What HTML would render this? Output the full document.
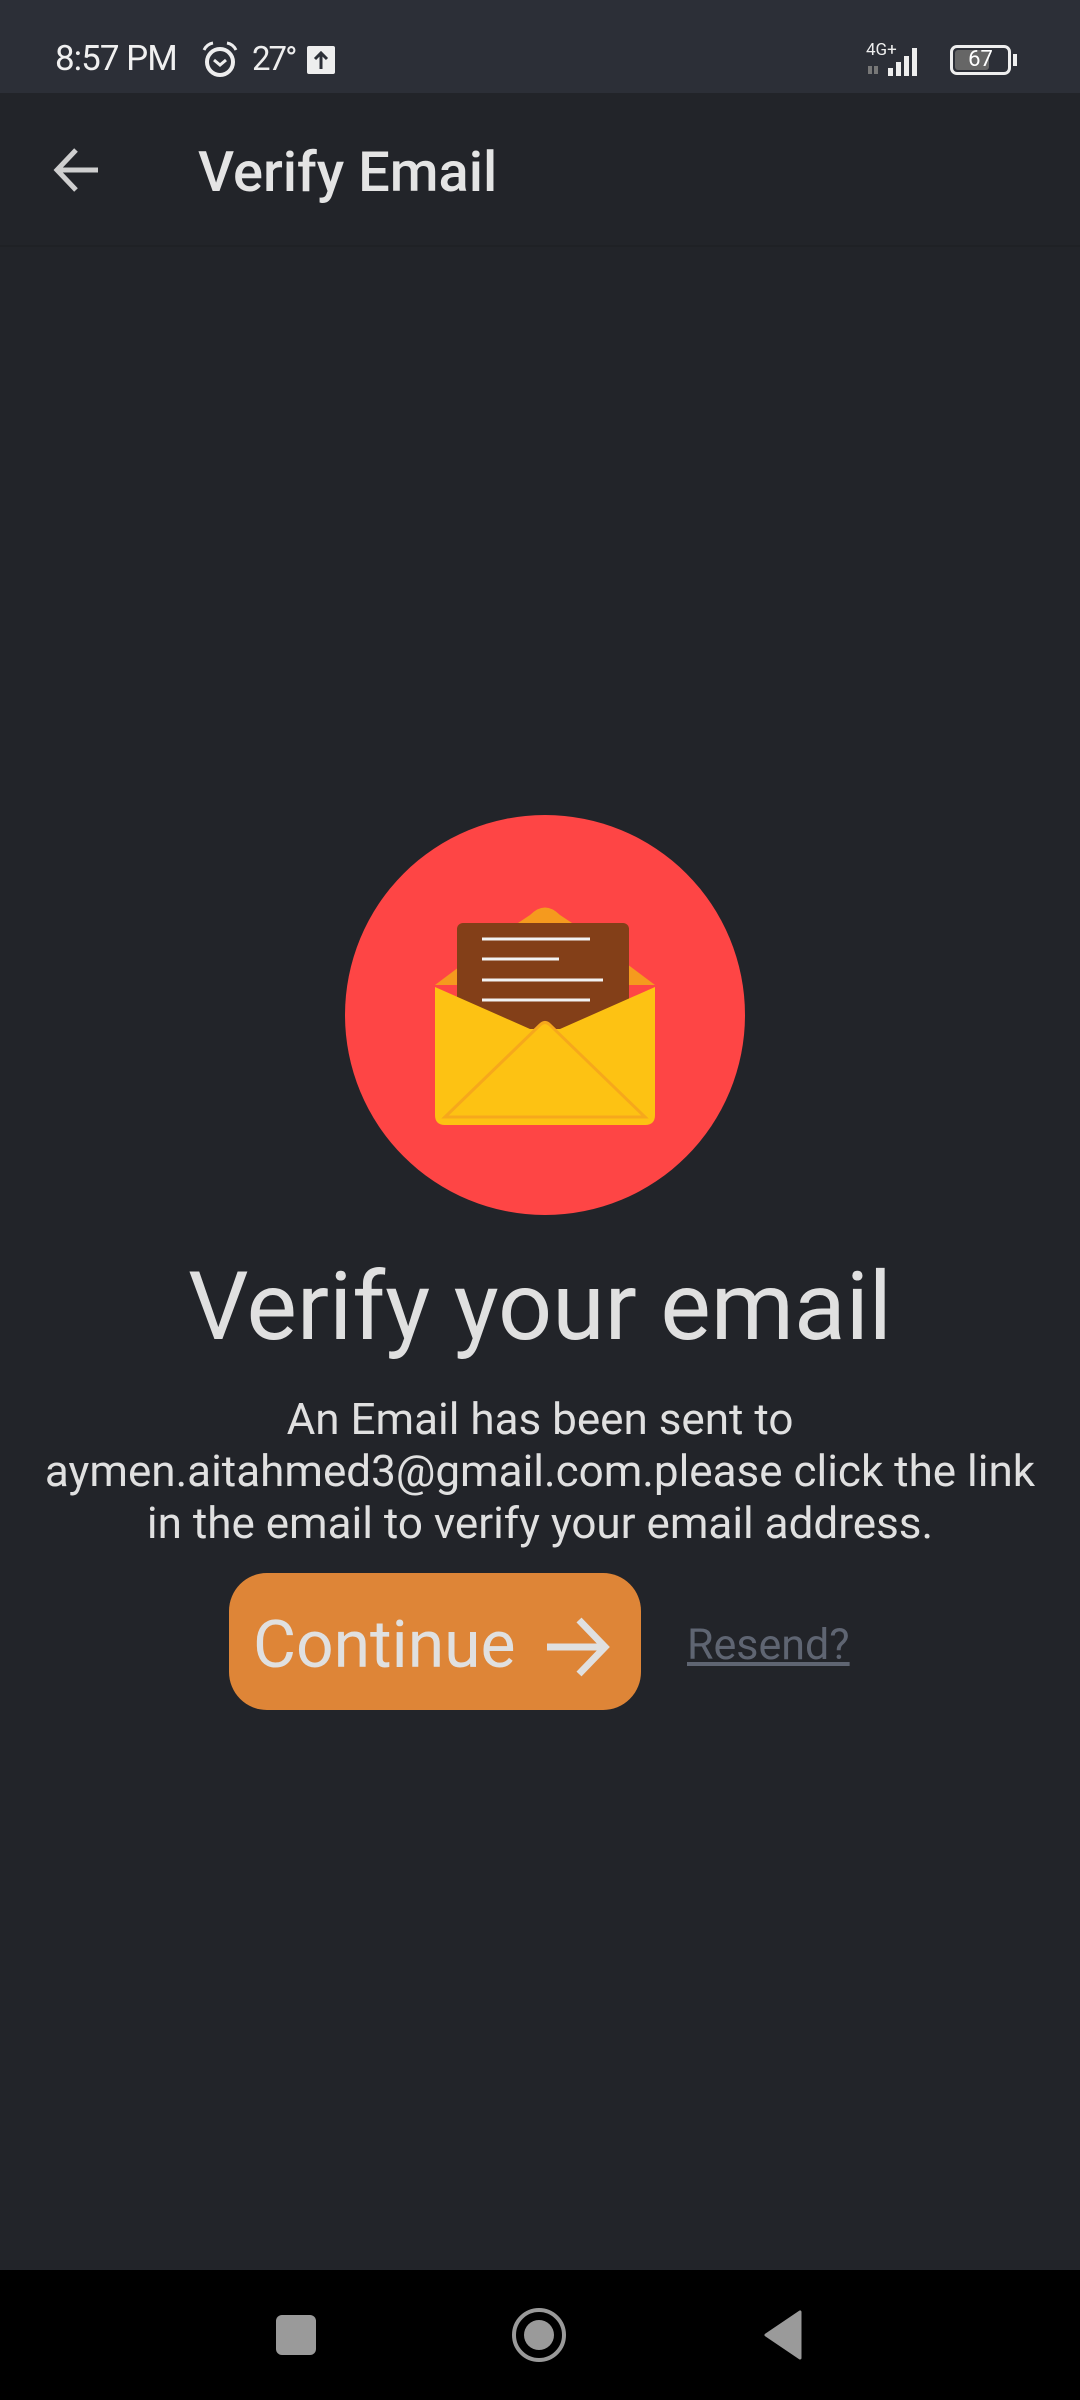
<!DOCTYPE html>
<html><head><meta charset="utf-8"><style>
*{margin:0;padding:0;box-sizing:border-box}
body{width:1080px;height:2400px;background:#222429;font-family:"Roboto","Liberation Sans",sans-serif;color:#e2e2e2;position:relative;overflow:hidden}
.abs{position:absolute}
</style></head><body>
<div class="abs" style="left:0;top:0;width:1080px;height:93px;background:#2c2f37"></div>
<div class="abs" style="left:55px;top:38px;font-size:35px;color:#f0f0f0;letter-spacing:-1px">8:57 PM</div>
<svg class="abs" style="left:200px;top:40px" width="40" height="40" viewBox="0 0 40 40"><circle cx="20" cy="22" r="13" fill="none" stroke="#eee" stroke-width="4"/><path d="M14 20l6 5 6-5" fill="none" stroke="#eee" stroke-width="3"/><path d="M4 10q3-6 9-7M36 10q-3-6-9-7" fill="none" stroke="#eee" stroke-width="3"/></svg>
<div class="abs" style="left:252px;top:40px;font-size:33px;color:#eee;letter-spacing:-2px">27°</div>
<div class="abs" style="left:307px;top:46px;width:28px;height:28px;background:#eee;border-radius:2px"></div>
<svg class="abs" style="left:307px;top:46px" width="28" height="28"><path d="M14 23V7M8 13l6-6 6 6" fill="none" stroke="#2c2f37" stroke-width="3"/></svg>
<div class="abs" style="left:866px;top:40px;font-size:17px;color:#eee">4G+</div>
<svg class="abs" style="left:866px;top:44px" width="70" height="32"><rect x="22" y="24" width="5" height="8" fill="#eee"/><rect x="30" y="18" width="5" height="14" fill="#eee"/><rect x="38" y="12" width="5" height="20" fill="#eee"/><rect x="46" y="4" width="5" height="28" fill="#eee"/><rect x="2" y="22" width="4" height="8" fill="#777"/><rect x="8" y="22" width="4" height="8" fill="#777"/></svg>
<div class="abs" style="left:950px;top:45px;width:61px;height:30px;border:3px solid #eee;border-radius:7px"></div>
<div class="abs" style="left:955px;top:50px;width:34px;height:20px;background:#666;border-radius:3px"></div>
<div class="abs" style="left:1013px;top:54px;width:4px;height:12px;background:#eee"></div>
<div class="abs" style="left:955px;top:45px;width:51px;text-align:center;font-size:22px;line-height:30px;color:#fff">67</div>

<div class="abs" style="left:0;top:93px;width:1080px;height:154px;background:#222429;border-bottom:2px solid #1f2125"></div>
<svg class="abs" style="left:52px;top:146px" width="50" height="50" viewBox="0 0 50 50"><path d="M46 24H6M24 4L5 24l19 20" fill="none" stroke="#cfcfcf" stroke-width="5"/></svg>
<div class="abs" style="left:198px;top:139px;font-size:56px;font-weight:500;color:#e4e4e4;letter-spacing:0px">Verify Email</div>

<svg class="abs" style="left:345px;top:815px" width="400" height="400" viewBox="0 0 400 400">
<circle cx="200" cy="200" r="200" fill="#fe4545"/>
<path d="M90 170 L170 110 L185 100 Q200 85 215 100 L230 110 L310 170 Z" fill="#f59a1e"/>
<rect x="112" y="108" width="172" height="120" rx="6" fill="#833f18"/>
<g stroke="#f2f2f2" stroke-width="3"><line x1="137" y1="124" x2="245" y2="124"/><line x1="137" y1="144" x2="214" y2="144"/><line x1="137" y1="165" x2="258" y2="165"/><line x1="137" y1="185" x2="245" y2="185"/></g>
<path d="M90 172 L185 214 L215 214 L310 172 L310 300 Q310 310 300 310 L100 310 Q90 310 90 300 Z" fill="#fdc213"/>
<path d="M100 302 L195 210 Q200 205 205 210 L300 302 Z" fill="#fdc213" stroke="#f6a81c" stroke-width="3"/>
</svg>

<div class="abs" style="left:0;top:1252px;width:1080px;text-align:center;font-size:95px;color:#e0e0e0">Verify your email</div>
<div class="abs" style="left:0;top:1393px;width:1080px;text-align:center;font-size:44px;line-height:52px;color:#e0e0e0">An Email has been sent to<br>aymen.aitahmed3@gmail.com.please click the link<br>in the email to verify your email address.</div>

<div class="abs" style="left:229px;top:1573px;width:412px;height:137px;background:#de8537;border-radius:38px"></div>
<div class="abs" style="left:253px;top:1607px;font-size:66px;color:#e0e0e0">Continue</div>
<svg class="abs" style="left:543px;top:1614px" width="70" height="66" viewBox="0 0 70 66"><path d="M4 33H62M36 6L62 33L36 60" fill="none" stroke="#e0e0e0" stroke-width="7"/></svg>
<div class="abs" style="left:687px;top:1620px;font-size:43px;color:#5f6572;text-decoration:underline">Resend?</div>

<div class="abs" style="left:0;top:2270px;width:1080px;height:130px;background:#000"></div>
<div class="abs" style="left:276px;top:2315px;width:40px;height:40px;background:#9a9a9a;border-radius:6px"></div>
<div class="abs" style="left:512px;top:2308px;width:54px;height:54px;border:4px solid #9a9a9a;border-radius:50%"></div>
<div class="abs" style="left:524px;top:2320px;width:30px;height:30px;background:#9a9a9a;border-radius:50%"></div>
<svg class="abs" style="left:762px;top:2310px" width="42" height="50"><path d="M38 2V48L4 25Z" fill="#9a9a9a" stroke="#9a9a9a" stroke-width="3" stroke-linejoin="round"/></svg>
</body></html>
